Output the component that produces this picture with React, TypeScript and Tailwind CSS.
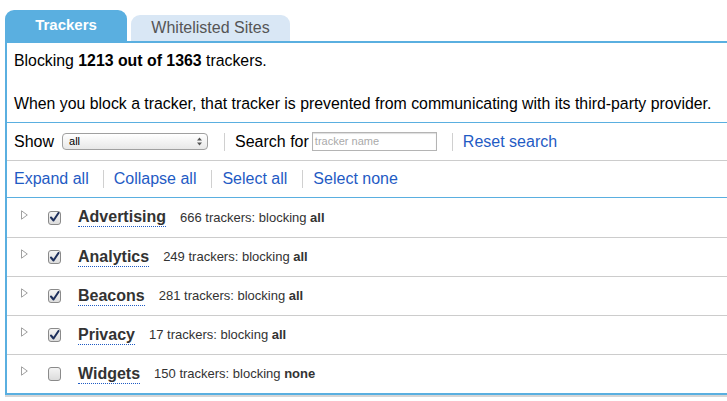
import { useState } from "react";

interface Category {
  name: string;
  count: number;
  blocking: string;
  checked: boolean;
}

const categories: Category[] = [
  { name: "Advertising", count: 666, blocking: "all", checked: true },
  { name: "Analytics", count: 249, blocking: "all", checked: true },
  { name: "Beacons", count: 281, blocking: "all", checked: true },
  { name: "Privacy", count: 17, blocking: "all", checked: true },
  { name: "Widgets", count: 150, blocking: "none", checked: false },
];

const Triangle = () => (
  <svg width="7" height="10" viewBox="0 0 7 10" className="shrink-0 block">
    <path d="M0.5 0.8 L6.3 5 L0.5 9.2 Z" fill="white" stroke="#a0a0a0" strokeWidth="1" />
  </svg>
);

const Checkbox = ({ checked }: { checked: boolean }) => (
  <span className="w-[13px] h-[14px] rounded-[3px] border border-[#8a8a8a] bg-gradient-to-b from-[#f4f4f4] to-[#dcdcdc] flex items-center justify-center shrink-0">
    {checked && (
      <svg width="11" height="11" viewBox="0 0 11 11">
        <path d="M2 5.5 L4.5 8.5 L9.5 1" fill="none" stroke="#1d2f5c" strokeWidth="2" strokeLinecap="round" strokeLinejoin="round" />
      </svg>
    )}
  </span>
);

const Divider = () => <span className="block w-px h-[18px] bg-[#d0d0d0]" />;

export default function App() {
  const [tab, setTab] = useState("trackers");

  return (
    <div className="w-[727px] h-[401px] bg-white overflow-hidden font-['Liberation_Sans',Arial,sans-serif] text-black">
      {/* tabs */}
      <div className="flex items-end gap-1 pl-[5px] pt-[10px] h-[41px]">
        <button
          onClick={() => setTab("trackers")}
          className={`w-[122px] h-[31px] rounded-t-[9px] font-bold text-[15px] flex items-center justify-center ${tab === "trackers" ? "bg-[#5aafe0] text-white" : "bg-[#5aafe0] text-white"}`}
        >
          Trackers
        </button>
        <button
          onClick={() => setTab("whitelist")}
          className="w-[159px] h-[26px] rounded-t-[9px] bg-[#d9e7f5] text-[#555] text-[16px] flex items-center justify-center"
        >
          Whitelisted Sites
        </button>
      </div>

      {/* panel */}
      <div className="ml-[5px] border-l-2 border-t-2 border-b-2 border-[#5aafe0] shadow-[0_2px_0_#d6d6d6]">
        <div className="px-[7px] pt-[7px] pb-[8px] text-[15.85px] leading-[21px]">
          <p>
            Blocking <b>1213 out of 1363</b> trackers.
          </p>
          <p className="mt-[22px]">
            When you block a tracker, that tracker is prevented from communicating with its third-party provider.
          </p>
        </div>

        <div className="border-t border-[#5aafe0] h-[38px] flex items-center px-[7px] text-[16px]">
          <span>Show</span>
          <span className="ml-[8px] w-[146px] h-[17px] rounded-[4px] border border-[#a0a0a0] bg-gradient-to-b from-white to-[#e8e8e8] flex items-center justify-between pl-[6px] pr-[5px] text-[11px]">
            all
            <svg width="5" height="9" viewBox="0 0 5 9">
              <path d="M0 3.5 L2.5 0.5 L5 3.5 Z M0 5.5 L2.5 8.5 L5 5.5 Z" fill="#555" />
            </svg>
          </span>
          <span className="ml-[16px]">
            <Divider />
          </span>
          <span className="ml-[10px]">Search for</span>
          <span className="ml-[3px] w-[125px] h-[19px] border border-[#b4b4b4] shadow-[inset_0_1px_1px_#ddd] text-[11px] text-[#aaa] pl-[2px] flex items-center">
            tracker name
          </span>
          <span className="ml-[15px]">
            <Divider />
          </span>
          <a className="ml-[10px] text-[#1f5bc4] cursor-pointer">Reset search</a>
        </div>

        <div className="border-t border-[#cccccc] h-[37px] flex items-center px-[7px] text-[16px] text-[#1f5bc4]">
          <a className="cursor-pointer">Expand all</a>
          <span className="ml-[14px] mr-[10px]"><Divider /></span>
          <a className="cursor-pointer">Collapse all</a>
          <span className="ml-[15px] mr-[10px]"><Divider /></span>
          <a className="cursor-pointer">Select all</a>
          <span className="ml-[15px] mr-[10px]"><Divider /></span>
          <a className="cursor-pointer">Select none</a>
        </div>

        <div className="border-t border-[#5aafe0]">
          {categories.map((c, i) => (
            <div
              key={c.name}
              className={`h-[39px] flex items-center text-[#333] ${i > 0 ? "border-t border-[#cccccc]" : ""}`}
            >
              <span className="ml-[14px] -mt-[6px]">
                <Triangle />
              </span>
              <span className="ml-[20px]">
                <Checkbox checked={c.checked} />
              </span>
              <span className="ml-[17px] font-bold text-[16px] border-b border-dotted border-[#1f5bc4] leading-[18px]">
                {c.name}
              </span>
              <span className="ml-[14px] text-[13px]">
                {c.count} trackers: blocking <b>{c.blocking}</b>
              </span>
            </div>
          ))}
        </div>
      </div>
    </div>
  );
}
